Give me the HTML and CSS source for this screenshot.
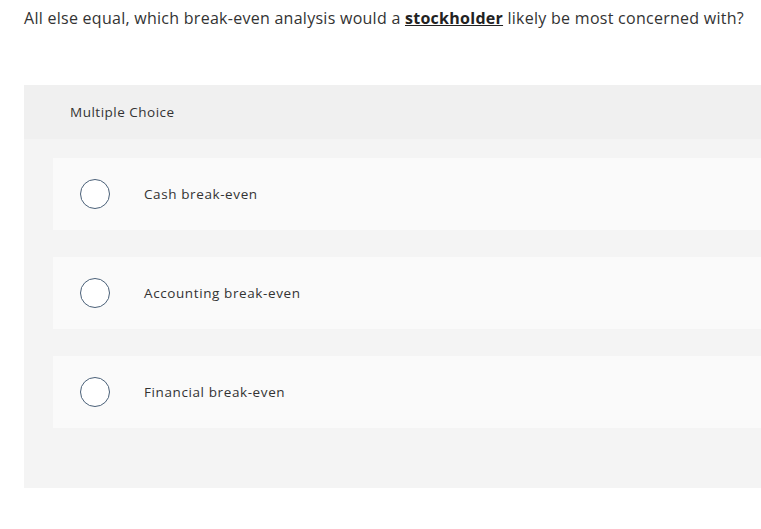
FILE: index.html
```html
<!DOCTYPE html>
<html>
<head>
<meta charset="utf-8">
<link rel="stylesheet" href="styles.css">
</head>
<body>
<div class="page">
  <p class="question">All else equal, which break-even analysis would a <a class="term">stockholder</a> likely be most concerned with?</p>
  <div class="mc">
    <div class="mc-header">Multiple Choice</div>
    <div class="mc-body">
      <div class="option"><span class="radio"></span><span class="label">Cash break-even</span></div>
      <div class="option"><span class="radio"></span><span class="label">Accounting break-even</span></div>
      <div class="option"><span class="radio"></span><span class="label">Financial break-even</span></div>
    </div>
  </div>
</div>
</body>
</html>
```
FILE: styles.css
```css
html, body {
  margin: 0;
  padding: 0;
  background: #fff;
  overflow: hidden;
}
body {
  font-family: "Open Sans", "Liberation Sans", sans-serif;
  color: #333;
}
.page {
  width: 761px;
  height: 529px;
  padding-left: 24px;
  box-sizing: border-box;
}
.question {
  margin: 0;
  padding-top: 7px;
  font-size: 16px;
  letter-spacing: 0.27px;
  line-height: 22px;
  color: #333;
  white-space: nowrap;
}
.term {
  font-weight: 700;
  text-decoration: underline;
  color: #222;
}
.mc {
  margin-top: 56px;
  width: 760px;
  background: #f4f4f4;
}
.mc-header {
  height: 54px;
  background: #f0f0f0;
  display: flex;
  align-items: center;
  padding-left: 46px;
  font-size: 13.5px;
  letter-spacing: 0.5px;
  color: #333;
}
.mc-body {
  padding: 19px 0 60px 29px;
  display: flex;
  flex-direction: column;
  gap: 27px;
}
.option {
  height: 72px;
  background: #fafafa;
  display: flex;
  align-items: center;
  padding-left: 27px;
}
.radio {
  width: 28px;
  height: 28px;
  border: 1.3px solid #4a6078;
  border-radius: 50%;
  background: #fff;
  flex: none;
}
.label {
  margin-left: 34px;
  font-size: 13.5px;
  letter-spacing: 0.6px;
  color: #333;
}
```
